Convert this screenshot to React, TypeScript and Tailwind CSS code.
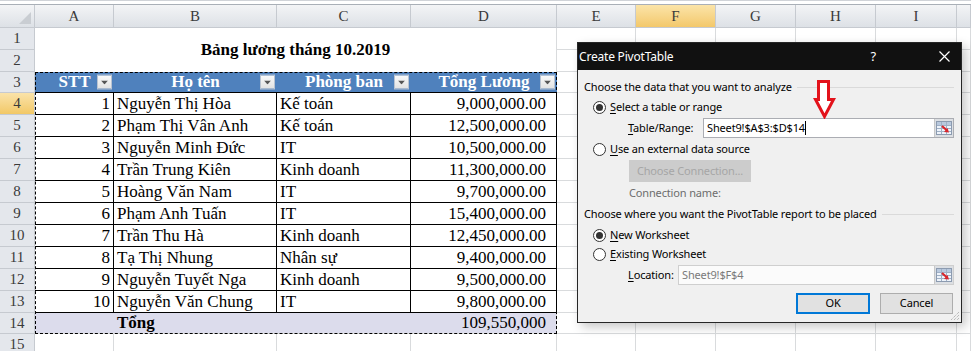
import React from "react";

const rows = [
  [1, "Nguyễn Thị Hòa", "Kế toán", "9,000,000.00"],
  [2, "Phạm Thị Vân Anh", "Kế toán", "12,500,000.00"],
  [3, "Nguyễn Minh Đức", "IT", "10,500,000.00"],
  [4, "Trần Trung Kiên", "Kinh doanh", "11,300,000.00"],
  [5, "Hoàng Văn Nam", "IT", "9,700,000.00"],
  [6, "Phạm Anh Tuấn", "IT", "15,400,000.00"],
  [7, "Trần Thu Hà", "Kinh doanh", "12,450,000.00"],
  [8, "Tạ Thị Nhung", "Nhân sự", "9,400,000.00"],
  [9, "Nguyễn Tuyết Nga", "Kinh doanh", "9,500,000.00"],
  [10, "Nguyễn Văn Chung", "IT", "9,800,000.00"],
];

const letters = ["A", "B", "C", "D", "E", "F", "G", "H", "I", ""];

function RowHead({ n, active }: { n: number; active?: boolean }) {
  return (
    <div
      className={`flex items-center justify-center border-r border-b border-[#c6cad0] text-[15px] text-[#3a3a3a] ${
        active ? "bg-gradient-to-b from-[#fae3a9] to-[#f2c865]" : "bg-[#e4e7ec]"
      }`}
    >
      {n}
    </div>
  );
}

function Empty({ n }: { n: number }) {
  // plain gridline cells for columns E..end
  return (
    <>
      {Array.from({ length: n }).map((_, i) => (
        <div key={i} className="border-r border-b border-[#d9dbdd]" />
      ))}
    </>
  );
}

function FilterBtn() {
  return (
    <span className="absolute right-[2px] top-1/2 -translate-y-1/2 w-[15px] h-[15px] bg-gradient-to-b from-[#fafafa] to-[#e2e2e2] border border-[#b9c3d1] flex items-center justify-center">
      <svg width="7" height="4" viewBox="0 0 7 4">
        <path d="M0 0h7L3.5 4z" fill="#555" />
      </svg>
    </span>
  );
}

function Radio({ checked }: { checked?: boolean }) {
  return (
    <span className="w-[13px] h-[13px] rounded-full border border-[#333] bg-white flex items-center justify-center shrink-0">
      {checked && <span className="w-[7px] h-[7px] rounded-full bg-[#333]" />}
    </span>
  );
}

function RangeIcon() {
  return (
    <span className="w-[19px] h-[18px] bg-[#dcdfe3] border-l border-[#c8c8c8] flex items-center justify-center shrink-0">
      <svg width="16" height="14" viewBox="0 0 16 14">
        <rect x="0.5" y="0.5" width="15" height="13" fill="#eef3fa" stroke="#8c9bb0" />
        <rect x="1" y="1" width="14" height="3" fill="#b9c9de" />
        <path d="M1 4.5h14M1 7.5h14M1 10.5h14M5.5 1v12M10.5 1v12" stroke="#9fb0c6" />
        <path d="M6 5l5 4.5" stroke="#d8262c" strokeWidth="2.2" />
        <path d="M8 11l5 0.5-1.5-4.5z" fill="#d8262c" />
      </svg>
    </span>
  );
}

function Section({ children }: { children: React.ReactNode }) {
  return (
    <div className="flex items-center h-[18px] pl-[6px] pr-[7px] gap-[5px]">
      <span className="whitespace-nowrap">{children}</span>
      <span className="flex-1 h-px bg-[#dadada]" />
    </div>
  );
}

function PivotDialog() {
  return (
    <div className="absolute left-[577px] top-[42px] w-[385px] h-[281px] bg-[#f0f0f0] border border-[#262626] shadow-[4px_4px_10px_rgba(0,0,0,0.22)] font-['Noto_Sans'] text-[11px] tracking-[-0.15px] text-black flex flex-col">
      {/* title bar */}
      <div className="h-[27px] bg-[#111111] text-white flex items-center pl-[1px] text-[12px] tracking-[-0.2px] shrink-0">
        <span>Create PivotTable</span>
        <span className="ml-auto mr-[63px] text-[13px]">?</span>
        <svg width="11" height="11" viewBox="0 0 11 11" className="mr-[11px]">
          <path d="M0.5 0.5l10 10M10.5 0.5l-10 10" stroke="#fff" strokeWidth="1.2" />
        </svg>
      </div>

      <div className="mt-[8px]">
        <Section>Choose the data that you want to analyze</Section>
      </div>
      <div className="mt-[2px] h-[18px] flex items-center pl-[15px] gap-[4px]">
        <Radio checked />
        <span>
          <span className="underline underline-offset-[2px]">S</span>elect a table or range
        </span>
      </div>
      <div className="mt-[2px] h-[20px] flex items-center pl-[50px] pr-[7px]">
        <span className="w-[75px]">
          <span className="underline underline-offset-[2px]">T</span>able/Range:
        </span>
        <div className="flex-1 h-[20px] bg-white border border-[#abadb3] flex items-center">
          <span className="pl-[3px]">Sheet9!$A$3:$D$14</span>
          <span className="w-px h-[14px] bg-black" />
          <span className="ml-auto">
            <RangeIcon />
          </span>
        </div>
      </div>
      <div className="mt-[2px] h-[18px] flex items-center pl-[15px] gap-[4px]">
        <Radio />
        <span>
          <span className="underline underline-offset-[2px]">U</span>se an external data source
        </span>
      </div>
      <div className="mt-[2px] h-[22px] pl-[51px]">
        <div className="w-[122px] h-[22px] bg-[#cccccc] text-[#a6a6a6] flex items-center justify-center">
          Choose Connection...
        </div>
      </div>
      <div className="mt-[2px] h-[18px] flex items-center pl-[51px] text-[#6d6d6d]">Connection name:</div>

      <div className="mt-[3px]">
        <Section>Choose where you want the PivotTable report to be placed</Section>
      </div>
      <div className="mt-[3px] h-[18px] flex items-center pl-[15px] gap-[4px]">
        <Radio checked />
        <span>
          <span className="underline underline-offset-[2px]">N</span>ew Worksheet
        </span>
      </div>
      <div className="mt-[1px] h-[18px] flex items-center pl-[15px] gap-[4px]">
        <Radio />
        <span>
          <span className="underline underline-offset-[2px]">E</span>xisting Worksheet
        </span>
      </div>
      <div className="mt-[2px] h-[20px] flex items-center pl-[50px] pr-[7px]">
        <span className="w-[50px]">
          <span className="underline underline-offset-[2px]">L</span>ocation:
        </span>
        <div className="flex-1 h-[20px] bg-[#fbfbfb] border border-[#cfcfcf] flex items-center text-[#7a7a7a]">
          <span className="pl-[3px]">Sheet9!$F$4</span>
          <span className="ml-auto">
            <RangeIcon />
          </span>
        </div>
      </div>
      <div className="mt-[8px] h-[21px] flex justify-end gap-[10px] pr-[8px]">
        <button className="w-[74px] h-[21px] bg-[#e1e1e1] border-2 border-[#0078d7] flex items-center justify-center">
          OK
        </button>
        <button className="w-[73px] h-[21px] bg-[#e1e1e1] border border-[#adadad] flex items-center justify-center">
          Cancel
        </button>
      </div>
      {/* resize grip */}
      <svg width="10" height="10" viewBox="0 0 10 10" className="absolute right-[1px] bottom-[1px]">
        <path d="M9 1L1 9M9 4L4 9M9 7L7 9" stroke="#a0a0a0" strokeDasharray="1 1" />
      </svg>
    </div>
  );
}

export default function App() {
  return (
    <div className="relative w-[971px] h-[351px] overflow-hidden bg-white font-['Liberation_Serif']">
      {/* formula bar edge */}
      <div className="h-[5px] border-t border-[#d0d3d8] border-b border-b-[#a9afb7] bg-white" />

      <div className="grid grid-cols-[35px_79px_163px_134px_146px_79px_80px_80px_80px_81px_1fr] grid-rows-[23px_22px_22px_21px_repeat(10,22px)_21px_22px] text-[17px]">
        {/* column headers */}
        <div className="relative bg-gradient-to-b from-[#f3f4f6] to-[#dde1e6] border-r border-b border-[#c6cad0]">
          <svg width="12" height="12" viewBox="0 0 12 12" className="absolute right-[3px] bottom-[3px]">
            <path d="M12 0V12H0z" fill="#c9cdd2" />
          </svg>
        </div>
        {letters.map((l, i) => (
          <div
            key={i}
            className={`flex items-center justify-center border-r border-b border-[#c6cad0] text-[15px] text-[#3a3a3a] ${
              l === "F" ? "bg-gradient-to-b from-[#fbe4a8] to-[#f3c86a]" : "bg-gradient-to-b from-[#f3f4f6] to-[#dde1e6]"
            }`}
          >
            {l}
          </div>
        ))}

        {/* rows 1-2 with merged title */}
        <RowHead n={1} />
        <div className="col-span-4 row-span-2 flex items-center justify-center font-bold border-r border-[#d9dbdd]">
          Bảng lương tháng 10.2019
        </div>
        <Empty n={6} />
        <RowHead n={2} />
        <Empty n={6} />

        {/* row 3: table header */}
        <RowHead n={3} />
        {["STT", "Họ tên", "Phòng ban", "Tổng Lương"].map((h) => (
          <div key={h} className="relative bg-[#4f81bd] text-white font-bold flex items-center justify-center border-b border-black">
            {h}
            <FilterBtn />
          </div>
        ))}
        <Empty n={6} />

        {/* data rows */}
        {rows.map((r, i) => (
          <React.Fragment key={i}>
            <RowHead n={i + 4} active={i === 0} />
            <div className="flex items-center justify-end pr-[3px] border-r border-b border-black">{r[0]}</div>
            <div className="flex items-center pl-[3px] border-r border-b border-black whitespace-nowrap">{r[1]}</div>
            <div className="flex items-center pl-[3px] border-r border-b border-black whitespace-nowrap">{r[2]}</div>
            <div className="flex items-center justify-end pr-[10px] border-r border-b border-black">{r[3]}</div>
            <Empty n={6} />
          </React.Fragment>
        ))}

        {/* total row */}
        <RowHead n={14} />
        <div className="bg-[#dcdcec] border-b border-[#d9dbdd]" />
        <div className="bg-[#dcdcec] flex items-center pl-[3px] font-bold border-b border-[#d9dbdd]">Tổng</div>
        <div className="bg-[#dcdcec] border-b border-[#d9dbdd]" />
        <div className="bg-[#dcdcec] flex items-center justify-end pr-[10px] border-r border-b border-[#d9dbdd]">109,550,000</div>
        <Empty n={6} />

        <RowHead n={15} />
        <Empty n={10} />
      </div>

      {/* copy marquee around A3:D14 */}
      <div className="absolute left-[35px] top-[72px] w-[522px] h-[262px] border border-dashed border-black pointer-events-none" />

      <PivotDialog />

      {/* red arrow annotation */}
      <svg width="23" height="39" viewBox="0 0 23 39" className="absolute left-[813px] top-[80px]">
        <path d="M5.5 1.5H15.5V19.5H20.5L11.5 36.5L2.5 19.5H5.5Z" fill="#fff" stroke="#e3121b" strokeWidth="3" />
      </svg>
    </div>
  );
}
